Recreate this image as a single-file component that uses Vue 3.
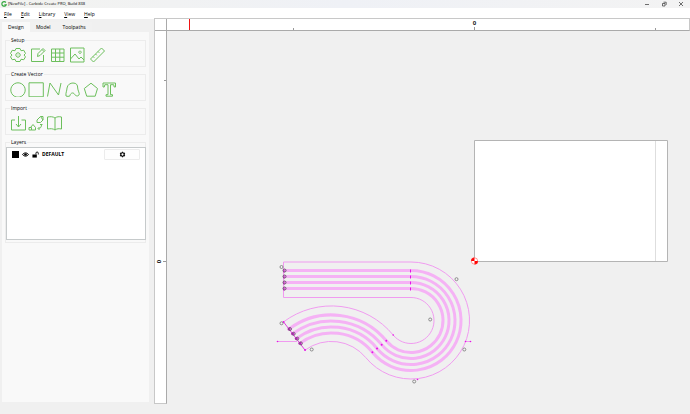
<script setup>
import { ref } from 'vue'

const menus = ['File', 'Edit', 'Library', 'View', 'Help']
const tabs = ['Design', 'Model', 'Toolpaths']
const activeTab = ref('Design')

const groups = [
  {
    title: 'Setup',
    wide: true,
    tools: [
      { name: 'Job setup', d: 'M6 1.500h4l1 2.200 2.800-.4L15.500 6.500 14 8l1.500 1.800L13.800 12.700l-2.800-.4L10 14.500H6l-1-2.200-2.800.4L.5 9.800 2 8 .5 6.500 2.200 3.300l2.800.4zM8 5.800a2.200 2.200 0 1 0 .01 0zM8 7.600v.8' },
      { name: 'Edit background', d: 'M10 2H1.500v12.500h12V8M7.500 9.500l.5-3 5-5 2 2-5 5zM12 2.500l2 2' },
      { name: 'Grid', d: 'M1.500 2h12.500v12.500H1.500zM1.500 6h12.500M1.500 10.200h12.500M5.500 2v12.500M9.800 2v12.500' },
      { name: 'Background image', d: 'M.5 1h13.500v14H.5zM.5 12l4.500-5 4 5 2-2 3 3M10 4a1.200 1.200 0 1 0 .01 0z' },
      { name: 'Measure', d: 'M.5 12L11.500 1l3 3L3.500 15zM3 9.500l1.300 1.300M5.500 7l1.300 1.300M8 4.500l1.300 1.300' }
    ]
  },
  {
    title: 'Create Vector',
    tools: [
      { name: 'Circle', d: 'M8 1.800a7.200 7.200 0 1 0 .01 0z' },
      { name: 'Rectangle', d: 'M1 1.800h14.300v14H1z' },
      { name: 'Polyline', d: 'M1.500 15.500L4 2l8.500 12L15 2' },
      { name: 'Curve', d: 'M2 15C1.500 11.500 3 10 3 7C3.500 3.500 6.500 2 9 2C12.500 2 13.700 4 13.700 7C13.700 9.500 16 12.500 15 14C13.500 16 11 14.500 10 12.500C8 11 6 13 6 14.800C5 15.500 3 15.500 2 15z' },
      { name: 'Polygon', d: 'M9 2.200l6.500 5.300L13.200 15.200h-8.500L2.300 7.500z' },
      { name: 'Text', d: 'M3 2h12.500v4h-1.300l-.5-2.300H10.500v10h2v1.500H6v-1.500h2V3.700H4.800L4.300 6H3z' }
    ]
  },
  {
    title: 'Import',
    tools: [
      { name: 'Import file', d: 'M5 5H1.500v10h14V5h-4M8.500 1v11M6 9l2.500 3L11 9' },
      { name: 'Trace image', d: 'M1 15h2.500v-2.500H1zM3.500 15h4v-2.500L5 9.500 2.500 12.500M9 7.500V5l3.500-3.500H15V5l-2.500 2.500zM12.500 1.500L15 5M13.500 9.500c0 2.500-1 4-3 4M12 9.500h2.500M11.500 12l-1.500 1.500 1.500 1.500' },
      { name: 'Library', d: 'M9 3C7 1.500 4.500 1.500 1.500 2v12c3-.5 5.500-.5 7.500 1 2-1.500 4-1.500 6.500-1V2C13 1.500 11 1.500 9 3zM9 3v12' }
    ]
  }
]

// The vector is a straight run, a large bend, and a counter bend sharing a tangent point.
const bend = { x: 411, y: 320.5 }
const counter = { x: 332, y: 385.5 }
const span = 103
const startX = 283.5

const jointAt = r => ({ x: bend.x - 0.772 * r, y: bend.y + 0.635 * r })
const endAt = r => ({ x: counter.x - 0.606 * (span - r), y: counter.y - 0.795 * (span - r) })

function ribbon(r) {
  const j = jointAt(r)
  const e = endAt(r)
  const r2 = span - r
  return `M${startX} ${bend.y - r}H${bend.x}A${r} ${r} 0 1 1 ${j.x} ${j.y}A${r2} ${r2} 0 0 0 ${e.x} ${e.y}`
}

const edges = [23, 58.5]
const tracks = [32, 38, 44, 50]
const outerEnd = endAt(23)
const innerEnd = endAt(58.5)
const handles = [
  [281.5, 267], [281.500, 323.300], [311.700, 349.500], [456.500, 279.200],
  [430.200, 319.500], [464.300, 349.500], [414.200, 381.500]
]
</script>

<template>
  <div class="window">
    <header class="titlebar">
      <svg class="logo" viewBox="0 0 8 8" aria-hidden="true">
        <path d="M6.500 2A3 3 0 1 0 7 5H4.500" fill="none" stroke="#35a83f" stroke-width="1.600" />
      </svg>
      <h1>[NewFile] - Carbide Create PRO, Build 838</h1>
      <div class="controls">
        <button aria-label="Minimize"><svg viewBox="0 0 6 6"><path d="M1 3.500h4" /></svg></button>
        <button aria-label="Restore"><svg viewBox="0 0 6 6"><path d="M1.500 2.500h2.500v2.500H1.500zM2.500 1.200h2.700v2.700" /></svg></button>
        <button aria-label="Close"><svg viewBox="0 0 6 6"><path d="M1 1l4 4M5 1L1 5" /></svg></button>
      </div>
    </header>

    <nav class="menubar">
      <button v-for="m in menus" :key="m"><u>{{ m[0] }}</u>{{ m.slice(1) }}</button>
    </nav>

    <main class="workspace">
      <aside class="sidebar">
        <div class="tabs" role="tablist">
          <button
            v-for="t in tabs"
            :key="t"
            role="tab"
            :aria-selected="t === activeTab"
            :class="{ active: t === activeTab }"
            @click="activeTab = t"
          >{{ t }}</button>
        </div>
        <div class="panel">
          <fieldset v-for="g in groups" :key="g.title">
            <legend>{{ g.title }}</legend>
            <div class="tools" :class="{ wide: g.wide }">
              <button v-for="tool in g.tools" :key="tool.name" :aria-label="tool.name">
                <svg viewBox="0 0 16 16"><path :d="tool.d" /></svg>
              </button>
            </div>
          </fieldset>
          <fieldset class="layers">
            <legend>Layers</legend>
            <ul>
              <li>
                <span class="swatch"></span>
                <svg class="mark" viewBox="0 0 8 8" aria-hidden="true">
                  <path d="M.5 4Q4 0 7.500 4Q4 8 .5 4z" fill="none" stroke="#000" stroke-width="1" />
                  <circle cx="4" cy="4" r="1.500" />
                </svg>
                <svg class="mark" viewBox="0 0 8 8" aria-hidden="true">
                  <path d="M.5 4h5v3.500h-5z" />
                  <path d="M4.500 4V2.500a1.300 1.300 0 0 1 2.700 0V4" fill="none" stroke="#000" stroke-width="1" />
                </svg>
                <span class="name">DEFAULT</span>
                <button aria-label="Layer settings">
                  <svg viewBox="0 0 8 8">
                    <circle cx="4" cy="4" r="2" fill="none" stroke="#000" stroke-width="1.400" />
                    <path d="M4 .8v1.200M4 6v1.200M1.200 2.400l1 .6M5.800 5l1 .6M1.200 5.600l1-.6M5.800 3l1-.6" stroke="#000" stroke-width="1.300" />
                  </svg>
                </button>
              </li>
            </ul>
          </fieldset>
        </div>
      </aside>

      <section class="editor">
        <div class="corner"></div>
        <svg class="ruler top" aria-hidden="true">
          <g transform="translate(-167 -19)">
            <path d="M189.500 19v12" stroke="#f01414" />
            <path d="M293.500 28v3M474.500 27v4M655.500 28v3" stroke="#999" />
            <text x="474.500" y="25" text-anchor="middle">0</text>
          </g>
        </svg>
        <svg class="ruler left" aria-hidden="true">
          <g transform="translate(-155 -31)">
            <path d="M164 80.500h3M163 261.500h4" stroke="#999" />
            <text transform="translate(161 261.500) rotate(-90)" text-anchor="middle">0</text>
          </g>
        </svg>
        <svg class="canvas" role="img" aria-label="Drawing area">
          <g transform="translate(-167 -31)" fill="none">
            <path d="M474.500 140.500h193v121h-193z" fill="#fff" stroke="#b4b4b4" />
            <path d="M655.500 141v120" stroke="#dedede" />

            <path v-for="r in tracks" :key="r" :d="ribbon(r)" stroke="#f5b2f5" stroke-width="3" />
            <path v-for="r in edges" :key="'e' + r" :d="ribbon(r)" stroke="#f09cf0" stroke-width="1" />
            <path d="M283.500 262v35.500" stroke="#f09af0" />
            <path :d="`M${outerEnd.x} ${outerEnd.y}L${innerEnd.x} ${innerEnd.y}`" stroke="#e040e0" />
            <path d="M277 341.500h20M465 341.500h6" stroke="#f09af0" />

            <g v-for="r in tracks" :key="'m' + r">
              <rect :x="bend.x - 1" :y="bend.y - r - 1" width="1" height="3" fill="#e614e6" />
              <circle :cx="jointAt(r).x" :cy="jointAt(r).y" r="1" fill="#e614e6" />
              <rect :x="startX" :y="bend.y - r - 1" width="1" height="3" fill="#d400d4" />
              <circle :cx="startX + 1" :cy="bend.y - r" r="1.500" stroke="#6e556e" stroke-width="1" />
              <circle :cx="endAt(r).x" :cy="endAt(r).y" r="1.500" fill="#c916c9" />
              <circle :cx="endAt(r).x + 1" :cy="endAt(r).y" r="1.500" stroke="#7c5a7c" stroke-width="1" />
            </g>
            <g fill="#e614e6">
              <circle cx="277.500" cy="341.500" r=".8" />
              <circle cx="465.500" cy="341.500" r=".8" />
              <circle cx="470.500" cy="341.500" r=".8" />
              <circle cx="417.500" cy="379.500" r=".8" />
              <circle cx="393.200" cy="335" r=".8" />
              <circle :cx="outerEnd.x" :cy="outerEnd.y" r="1" />
              <circle :cx="innerEnd.x" :cy="innerEnd.y" r="1" />
            </g>
            <circle v-for="(h, i) in handles" :key="i" :cx="h[0]" :cy="h[1]" r="1.500" fill="#f4f4f4" stroke="#8a8a8a" />

            <circle cx="474.500" cy="261" r="3.500" fill="#fff" />
            <path d="M474.500 261v-3.500a3.500 3.500 0 0 0-3.500 3.500zM474.500 261v3.500a3.500 3.500 0 0 0 3.500-3.500z" fill="#f00" />
            <circle cx="474.500" cy="261" r="3.200" stroke="#f33" stroke-width=".5" />
          </g>
        </svg>
      </section>
    </main>
  </div>
</template>

<style>
body {
  margin: 0;
  background: #f0f0f0;
}
</style>

<style scoped>
.window {
  display: flex;
  flex-direction: column;
  min-height: 100vh;
  background: #f0f0f0;
  color: #000;
  font: 5px/8px "Open Sans", "Noto Sans", sans-serif;
}

button {
  display: flex;
  align-items: center;
  justify-content: center;
  margin: 0;
  padding: 0;
  border: 0;
  background: none;
  color: inherit;
  font: inherit;
}

.titlebar {
  display: flex;
  align-items: center;
  height: 8px;
  background: linear-gradient(90deg, #f3f3f0, #eff1f6 50%, #f3f3f3);
}

.logo {
  width: 6px;
  height: 6px;
  margin-left: 1px;
}

h1 {
  margin: 0 0 0 1px;
  font-size: 4px;
  line-height: 8px;
  font-weight: 400;
}

.controls {
  display: flex;
  gap: 11px;
  margin-left: auto;
  padding-right: 6px;
}

.controls svg {
  display: block;
  width: 6px;
  height: 6px;
  fill: none;
  stroke: #333;
  stroke-width: 0.7;
}

.menubar {
  display: flex;
  gap: 9px;
  height: 11px;
  padding-left: 4px;
  background: #fff;
}

.menubar u {
  text-underline-offset: 1px;
  text-decoration-thickness: 1px;
}

.workspace {
  display: flex;
  flex: 1;
}

.sidebar {
  display: flex;
  flex-direction: column;
  width: 147px;
  padding: 3px 5px 12px 2px;
}

.tabs {
  display: flex;
  height: 10px;
}

.tabs button {
  padding: 0 6px;
  background: #f1f1f1;
}

.tabs .active {
  background: #f9f9f9;
}

.panel {
  display: flex;
  flex: 1;
  flex-direction: column;
  gap: 3px;
  padding: 4px 3px;
  background: #f9f9f9;
}

fieldset {
  box-sizing: border-box;
  min-width: 0;
  height: 31px;
  margin: 0;
  padding: 0;
  border: 1px solid #ececec;
}

legend {
  margin-left: 4px;
  padding: 0 1px;
}

.tools {
  display: flex;
  gap: 2px;
  padding: 3px 4px 0;
}

.tools.wide {
  gap: 4px;
}

.tools svg {
  display: block;
  width: 16px;
  height: 16px;
  fill: none;
  stroke: #6cbf5c;
  stroke-width: 1;
}

.layers {
  height: 105px;
}

ul {
  box-sizing: border-box;
  height: 93px;
  margin: 1px -1px 0 0;
  padding: 1px 5px;
  border: 1px solid #c6cacb;
  background: #fff;
  list-style: none;
}

li {
  display: flex;
  align-items: center;
  gap: 3px;
  height: 10px;
}

.swatch {
  width: 7px;
  height: 7px;
  background: #000;
}

.mark {
  width: 7px;
  height: 7px;
}

.name {
  font-weight: 700;
}

li button {
  box-sizing: border-box;
  width: 36px;
  height: 11px;
  margin-left: auto;
  border: 1px solid #ececec;
  border-radius: 1px;
  background: #fefefe;
}

li button svg {
  width: 7px;
  height: 7px;
}

.editor {
  display: grid;
  flex: 1;
  grid-template: 12px 1fr / 12px 1fr;
  box-sizing: border-box;
  min-width: 0;
  margin: -1px 0 10px;
  border-top: 1px solid #c8c8c8;
  border-left: 1px solid #c8c8c8;
}

.corner,
.ruler {
  box-sizing: border-box;
  background: #fff;
}

.corner {
  border-right: 1px solid #aaa;
  border-bottom: 1px solid #aaa;
}

.ruler {
  display: block;
  width: 100%;
  height: 100%;
}

.ruler text {
  fill: #222;
  font-size: 6px;
  font-weight: 700;
}

.top {
  border-right: 1px solid #c8c8c8;
  border-bottom: 1px solid #aaa;
}

.left {
  border-right: 1px solid #aaa;
  border-bottom: 1px solid #c8c8c8;
}

.canvas {
  display: block;
  width: 100%;
  height: 100%;
}
</style>
